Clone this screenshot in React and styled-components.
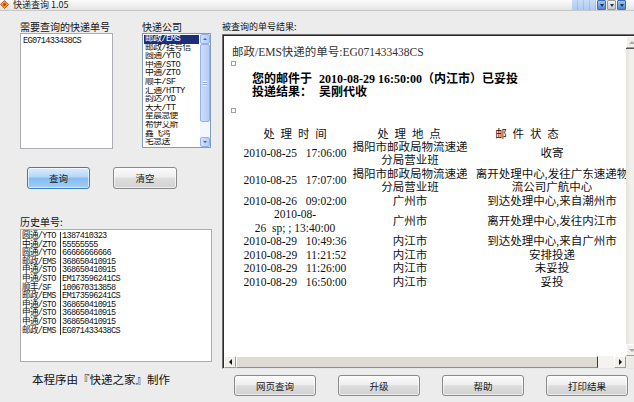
import React from 'react';
import styled, { createGlobalStyle } from 'styled-components';

const cjk = `"Noto Sans CJK SC", "Liberation Sans", sans-serif`;
const serif = `"Liberation Serif", "Noto Sans CJK SC", serif`;
const mono = `"Liberation Mono", "Noto Sans CJK SC", monospace`;

const GlobalStyle = createGlobalStyle`
  html, body { margin: 0; padding: 0; background: #ececec; }
  * { box-sizing: border-box; }
`;

const Window = styled.div`
  width: 634px;
  height: 402px;
  overflow: hidden;
  background: #ececec;
  display: flex;
  flex-direction: column;
  font-family: ${cjk};
  color: #111;
`;

const TitleBar = styled.div`
  height: 11px;
  flex-shrink: 0;
  display: flex;
  align-items: flex-start;
  background: linear-gradient(#fdfdfd, #e4e4e4);
  border-bottom: 1px solid #c8c8c8;
`;

const TitleText = styled.div`
  margin-left: 4px;
  font-size: 9px;
  line-height: 10px;
  color: #1a1a1a;
  white-space: nowrap;
`;

const Spacer = styled.div`
  flex: 1;
`;

const CaptionStrip = styled.div`
  width: 24px;
  height: 10px;
  background: repeating-linear-gradient(90deg, #d6e6fa 0 5px, #b9d0ef 5px 6px),
    linear-gradient(#eef5fd, #cfe0f7);
  background-blend-mode: multiply;
`;

const CaptionBtn = styled.div`
  width: 9px;
  height: 10px;
  margin-left: 1px;
  border: 1px solid ${p => (p.$blue ? '#3d6fb8' : '#9a9a9a')};
  background: ${p => (p.$blue ? 'linear-gradient(#9cc2f3, #4f86d6)' : 'linear-gradient(#f4f4f4, #c9c9c9)')};
  border-radius: 1px;
  display: flex;
  align-items: center;
  justify-content: center;
  &::after {
    content: '';
    border-left: 2px solid transparent;
    border-right: 2px solid transparent;
    border-top: 3px solid #1f3154;
  }
`;

const CaptionEnd = styled.div`
  width: 8px;
`;

const Body = styled.div`
  flex: 1;
  display: flex;
  gap: 10px;
  padding: 9px 0 0 20px;
`;

const LeftPanel = styled.div`
  width: 192px;
  flex-shrink: 0;
  display: flex;
  flex-direction: column;
`;

const TopRow = styled.div`
  display: flex;
  gap: 29px;
`;

const Field = styled.div`
  display: flex;
  flex-direction: column;
`;

const Label = styled.div`
  font-size: ${p => p.$size || 10}px;
  line-height: ${p => p.$lh || 13}px;
  height: ${p => p.$lh || 13}px;
  white-space: nowrap;
  margin-top: ${p => p.$mt || 0}px;
`;

const TrackBox = styled.div`
  width: 93px;
  height: 116px;
  background: #fff;
  border: 1px solid #abadb3;
  padding: 3px 2px;
  font-family: ${mono};
  font-size: 8.6px;
  line-height: 9px;
  letter-spacing: -0.7px;
`;

const ListBox = styled.div`
  width: 69px;
  height: 115px;
  background: #fff;
  border: 1px solid #7f9db9;
  display: flex;
`;

const ListItems = styled.div`
  flex: 1;
  padding: 1px 1px 0 1px;
  font-family: ${mono};
  font-size: 8.8px;
  letter-spacing: -0.6px;
`;

const ListItem = styled.div`
  height: 8.6px;
  line-height: 8.6px;
  padding-left: 1px;
  white-space: nowrap;
  overflow: hidden;
  background: ${p => (p.$selected ? '#1b2f78' : 'transparent')};
  color: ${p => (p.$selected ? '#fff' : '#111')};
`;

const XpScroll = styled.div`
  width: 10px;
  display: flex;
  flex-direction: column;
  background: #f3f6fd;
`;

const XpArrow = styled.div`
  height: 10px;
  border: 1px solid #93b1ed;
  border-radius: 2px;
  background: linear-gradient(90deg, #d3e0fd, #b3c9f7);
  display: flex;
  align-items: center;
  justify-content: center;
  &::after {
    content: '';
    border-left: 2px solid transparent;
    border-right: 2px solid transparent;
    ${p => (p.$up ? 'border-bottom: 2px solid #4d6185;' : 'border-top: 2px solid #4d6185;')}
  }
`;

const XpThumb = styled.div`
  height: 78px;
  border: 1px solid #95b0ea;
  border-radius: 2px;
  background: linear-gradient(90deg, #d0ddfc, #b6cbf8);
  display: flex;
  align-items: center;
  justify-content: center;
  &::after {
    content: '';
    width: 4px;
    height: 5px;
    background: repeating-linear-gradient(#eef3fe 0 1px, #8ea7dc 1px 2px);
  }
`;

const XpTrack = styled.div`
  flex: 1;
`;

const ButtonRow = styled.div`
  display: flex;
  gap: ${p => p.$gap}px;
  margin-top: ${p => p.$mt}px;
  padding-left: ${p => p.$pl}px;
`;

const Button = styled.button`
  width: ${p => p.$w}px;
  height: ${p => p.$h}px;
  padding: 0;
  font-family: ${cjk};
  font-size: 9.5px;
  color: #1a1a1a;
  border-radius: 3px;
  border: 1px solid ${p => (p.$primary ? '#3c7fb1' : '#8a8a8a')};
  background: ${p =>
    p.$primary
      ? 'linear-gradient(#dcedfd, #b3d6fa 45%, #88bcee 52%, #a0cdf5)'
      : 'linear-gradient(#fbfbfb, #eeeeee 45%, #dddddd 52%, #d2d2d2)'};
  box-shadow: inset 0 0 0 1px rgba(255, 255, 255, 0.6);
`;

const HistoryBox = styled.div`
  height: 133px;
  background: #fff;
  border: 1px solid #abadb3;
  padding: 2px 1px;
  font-family: ${mono};
  font-size: 8.6px;
  letter-spacing: -0.7px;
`;

const HistoryRow = styled.div`
  display: grid;
  grid-template-columns: 38px 1fr;
  height: 8.6px;
  line-height: 8.6px;
  white-space: nowrap;
`;

const HistoryNo = styled.span`
  border-left: 1px solid #333;
  padding-left: 1px;
`;

const Credit = styled.div`
  margin-top: 9px;
  padding-left: 12px;
  font-size: 11.5px;
  line-height: 17px;
  white-space: nowrap;
`;

const RightPanel = styled.div`
  width: 417px;
  flex-shrink: 0;
  display: flex;
  flex-direction: column;
`;

const ResultBox = styled.div`
  height: 335px;
  display: flex;
  flex-direction: column;
  border: 1px solid;
  border-color: #6f6f6f #e6e6e6 #e6e6e6 #6f6f6f;
  box-shadow: inset 1px 1px 0 #2b2b2b;
  padding: 1px 0 0 1px;
`;

const ResultMain = styled.div`
  flex: 1;
  min-height: 0;
  display: flex;
`;

const ResultContent = styled.div`
  flex: 1;
  background: #fff;
  padding-left: 8px;
  overflow: hidden;
  font-family: ${serif};
  color: #111;
`;

const VScroll = styled.div`
  width: 12px;
  display: flex;
  flex-direction: column;
  background: linear-gradient(90deg, #e6e4dd, #f3f2ee 50%, #e6e4dd);
`;

const ClassicArrow = styled.div`
  width: 12px;
  height: 12px;
  flex-shrink: 0;
  background: #f1f0eb;
  border: 1px solid;
  border-color: #fff #9d9d98 #9d9d98 #fff;
  display: flex;
  align-items: center;
  justify-content: center;
  &::after {
    content: '';
    ${p => {
      const c = p.$muted ? '#a8a8a8' : '#111';
      if (p.$dir === 'up') return `border-left:3px solid transparent;border-right:3px solid transparent;border-bottom:3px solid ${c};`;
      if (p.$dir === 'down') return `border-left:3px solid transparent;border-right:3px solid transparent;border-top:3px solid ${c};`;
      if (p.$dir === 'left') return `border-top:3px solid transparent;border-bottom:3px solid transparent;border-right:3px solid ${c};`;
      return `border-top:3px solid transparent;border-bottom:3px solid transparent;border-left:3px solid ${c};`;
    }}
  }
`;

const VTrack = styled.div`
  flex: 1;
  border-top: 1px solid #555;
`;

const HScroll = styled.div`
  height: 12px;
  flex-shrink: 0;
  display: flex;
  background: #f4f3ef;
`;

const HThumb = styled.div`
  width: 362px;
  background: #dddbd4;
  border: 1px solid;
  border-color: #fff #3a3a3a #8e8e8a #fff;
`;

const HTrack = styled.div`
  flex: 1;
`;

const Corner = styled.div`
  width: 12px;
  background: #ecebe6;
`;

const ResultTitle = styled.div`
  margin-top: 9px;
  font-size: 11.5px;
  line-height: 15px;
  color: #333;
  white-space: nowrap;
`;

const Square = styled.div`
  width: 5px;
  height: 5px;
  margin-left: -1px;
  margin-top: ${p => p.$mt}px;
  border: 1px solid #a0a0a0;
`;

const Summary = styled.div`
  display: grid;
  grid-template-columns: 67px auto;
  margin: 7px 0 0 20px;
  font-size: 12px;
  font-weight: bold;
  line-height: 12.5px;
  color: #000;
  white-space: nowrap;
`;

const TableHead = styled.div`
  display: grid;
  grid-template-columns: 114px 114px 122px;
  margin: 14.5px 0 0 6px;
  font-size: 11.5px;
  line-height: 13px;
  word-spacing: 3px;
  text-align: center;
  white-space: nowrap;
`;

const TraceRow = styled.div`
  display: grid;
  grid-template-columns: 114px 116px 168px;
  align-items: center;
  margin-left: 6px;
  font-size: 11.5px;
  line-height: 13.5px;
  text-align: center;
  white-space: nowrap;
`;

const TimeCell = styled.div`
  white-space: pre;
`;

const companies = [
  '邮政/EMS', '邮政/挂号信', '圆通/YTO', '申通/STO', '中通/ZTO', '顺丰/SF', '汇通/HTTY',
  '韵达/YD', '天天/TT', '星晨急便', '希伊艾斯', '鑫飞鸿', '宅急送',
];

const history = [
  ['圆通/YTO', '1387410323'],
  ['中通/ZTO', '55555555'],
  ['圆通/YTO', '66666666666'],
  ['邮政/EMS', '368650410915'],
  ['申通/STO', '368650410915'],
  ['申通/STO', 'EM173596241CS'],
  ['顺丰/SF', '100670313858'],
  ['邮政/EMS', 'EM173596241CS'],
  ['申通/STO', '368650410915'],
  ['申通/STO', '368650410915'],
  ['申通/STO', '368650410915'],
  ['邮政/EMS', 'EG071433438CS'],
];

const traces = [
  ['2010-08-25   17:06:00', ['揭阳市邮政局物流速递', '分局营业班'], ['收寄']],
  ['2010-08-25   17:07:00', ['揭阳市邮政局物流速递', '分局营业班'], ['离开处理中心,发往广东速递物', '流公司广航中心']],
  ['2010-08-26   09:02:00', ['广州市'], ['到达处理中心,来自潮州市']],
  ['2010-08-\n26  sp; ; 13:40:00', ['广州市'], ['离开处理中心,发往内江市']],
  ['2010-08-29   10:49:36', ['内江市'], ['到达处理中心,来自广州市']],
  ['2010-08-29   11:21:52', ['内江市'], ['安排投递']],
  ['2010-08-29   11:26:00', ['内江市'], ['未妥投']],
  ['2010-08-29   16:50:00', ['内江市'], ['妥投']],
];

const Lines = ({ lines }) => (
  <div>
    {lines.map((l, i) => (
      <div key={i}>{l}</div>
    ))}
  </div>
);

const AppIcon = () => (
  <svg width="9" height="9" viewBox="0 0 9 9">
    <path d="M4.5 0.5 L8.5 4.5 L4.5 8.5 L0.5 4.5 Z" fill="#f0a22a" stroke="#b5461a" strokeWidth="0.8" />
    <circle cx="4.5" cy="4.5" r="1.5" fill="#d9321e" />
  </svg>
);

export default function App() {
  return (
    <Window>
      <GlobalStyle />
      <TitleBar>
        <AppIcon />
        <TitleText>快递查询 1.05</TitleText>
        <Spacer />
        <CaptionStrip />
        <CaptionBtn $blue />
        <CaptionBtn />
        <CaptionBtn $blue />
        <CaptionEnd />
      </TitleBar>
      <Body>
        <LeftPanel>
          <TopRow>
            <Field>
              <Label>需要查询的快递单号</Label>
              <TrackBox>EG071433438CS</TrackBox>
            </Field>
            <Field>
              <Label>快递公司</Label>
              <ListBox>
                <ListItems>
                  {companies.map((c, i) => (
                    <ListItem key={c} $selected={i === 0}>{c}</ListItem>
                  ))}
                </ListItems>
                <XpScroll>
                  <XpArrow $up />
                  <XpThumb />
                  <XpTrack />
                  <XpArrow />
                </XpScroll>
              </ListBox>
            </Field>
          </TopRow>
          <ButtonRow $gap={23} $mt={18} $pl={7}>
            <Button $w={63} $h={22} $primary>查询</Button>
            <Button $w={64} $h={22}>清空</Button>
          </ButtonRow>
          <Label $mt={26} $lh={14}>历史单号:</Label>
          <HistoryBox>
            {history.map(([c, n], i) => (
              <HistoryRow key={i}>
                <span>{c}</span>
                <HistoryNo>{n}</HistoryNo>
              </HistoryRow>
            ))}
          </HistoryBox>
          <Credit>本程序由『快递之家』制作</Credit>
        </LeftPanel>
        <RightPanel>
          <Label $size={9} $lh={14}>被查询的单号结果:</Label>
          <ResultBox>
            <ResultMain>
              <ResultContent>
                <ResultTitle>邮政/EMS快递的单号:EG071433438CS</ResultTitle>
                <Square $mt={1} />
                <Summary>
                  <span>您的邮件于</span>
                  <span>2010-08-29 16:50:00（内江市）已妥投</span>
                  <span>投递结果：</span>
                  <span>吴刚代收</span>
                </Summary>
                <Square $mt={10} />
                <TableHead>
                  <span>处 理 时 间</span>
                  <span>处 理 地 点</span>
                  <span>邮 件 状 态</span>
                </TableHead>
                {traces.map(([t, loc, st], i) => (
                  <TraceRow key={i}>
                    <TimeCell>{t}</TimeCell>
                    <Lines lines={loc} />
                    <Lines lines={st} />
                  </TraceRow>
                ))}
              </ResultContent>
              <VScroll>
                <ClassicArrow $dir="up" $muted />
                <VTrack />
                <ClassicArrow $dir="down" $muted />
              </VScroll>
            </ResultMain>
            <HScroll>
              <ClassicArrow $dir="left" />
              <HThumb />
              <HTrack />
              <ClassicArrow $dir="right" />
              <Corner />
            </HScroll>
          </ResultBox>
          <ButtonRow $gap={22} $mt={6} $pl={12}>
            <Button $w={82} $h={21}>网页查询</Button>
            <Button $w={82} $h={21}>升级</Button>
            <Button $w={82} $h={21}>帮助</Button>
            <Button $w={82} $h={21}>打印结果</Button>
          </ButtonRow>
        </RightPanel>
      </Body>
    </Window>
  );
}
